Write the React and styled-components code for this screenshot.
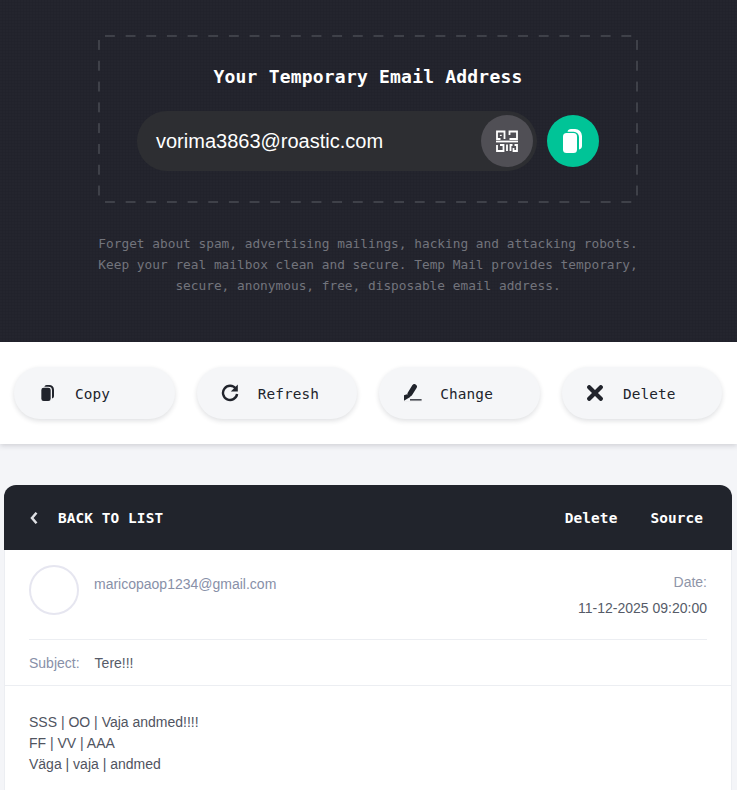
import React from 'react';
import styled, { createGlobalStyle } from 'styled-components';

const Global = createGlobalStyle`
  html, body { margin: 0; padding: 0; background: #f4f5f8; }
  * { box-sizing: border-box; }
  body { font-family: "Liberation Sans", Arial, sans-serif; height: 790px; overflow: hidden; }
`;
const MONO = `"DejaVu Sans Mono", "Liberation Mono", monospace`;
const DASH = '#3f4149';

const Hero = styled.header`
  height: 342px;
  padding: 35px 1px 0 0;
  background-color: #22232c;
  background-image:
    radial-gradient(circle at 1px 1px, rgba(255,255,255,.007) 0 1px, transparent 1px),
    radial-gradient(circle at 2.5px 2.5px, rgba(0,0,0,.025) 0 1px, transparent 1px);
  background-size: 3px 3px;
  display: flex;
  flex-direction: column;
  align-items: center;
`;
const DashedBox = styled.div`
  width: 540px;
  height: 168px;
  background-image:
    linear-gradient(90deg, ${DASH} 10px, transparent 10px),
    linear-gradient(90deg, ${DASH} 10px, transparent 10px),
    linear-gradient(${DASH} 10px, transparent 10px),
    linear-gradient(${DASH} 10px, transparent 10px);
  background-size: 20.67px 2px, 20.67px 2px, 2px 20.8px, 2px 20.8px;
  background-position: 7px 0, 7px 100%, 0 5px, 100% 5px;
  background-repeat: repeat-x, repeat-x, repeat-y, repeat-y;
  display: flex;
  flex-direction: column;
  align-items: center;
  padding-top: 30px;
`;
const Title = styled.h1`
  margin: 0 0 22px;
  font: 700 18px/24px ${MONO};
  letter-spacing: 0.2px;
  color: #fff;
`;
const AddressRow = styled.div`
  display: flex;
  align-items: center;
  gap: 10px;
`;
const Pill = styled.div`
  width: 400px;
  height: 60px;
  border-radius: 30px;
  background: #2d2e32;
  display: flex;
  align-items: center;
  justify-content: space-between;
  padding: 0 4px 0 19px;
  color: #fff;
  font-size: 20px;
`;
const RoundButton = styled.div`
  width: 52px;
  height: 52px;
  border-radius: 50%;
  background: ${p => p.$bg};
  display: flex;
  align-items: center;
  justify-content: center;
  color: #fff;
  flex: none;
`;
const Blurb = styled.p`
  margin: 30px 0 0;
  width: 560px;
  text-align: center;
  font: 400 12.8px/21px ${MONO};
  color: #72747c;
`;
const Toolbar = styled.nav`
  position: relative;
  height: 102px;
  background: #fff;
  box-shadow: 0 2px 5px rgba(30, 32, 50, .16);
  display: grid;
  grid-template-columns: repeat(4, 160.5px);
  gap: 22.17px;
  align-items: center;
  padding: 0 14px;
`;
const ToolButton = styled.div`
  height: 52px;
  border-radius: 26px;
  background: #f5f6f8;
  box-shadow: 0 2px 5px rgba(30, 32, 50, .14);
  display: flex;
  align-items: center;
  padding-left: 23.5px;
  font: 400 14.4px/20px ${MONO};
  letter-spacing: 0.1px;
  color: #21242c;
`;
const ToolIcon = styled.span`
  width: 20px;
  margin-right: 17.5px;
  flex: none;
  display: flex;
  align-items: center;
  justify-content: center;
`;
const ToolLabel = styled.span`
  padding-top: 1px;
`;
const Card = styled.main`
  margin: 41px 5px 0 4px;
  background: #fff;
  border-radius: 12px 12px 0 0;
  border: solid #eceef2;
  border-width: 0 1px;
`;
const CardBar = styled.div`
  margin: 0 -1px;
  height: 65px;
  border-radius: 12px 12px 0 0;
  background: #21242c;
  display: flex;
  align-items: center;
  justify-content: space-between;
  padding: 0 29px 0 25.5px;
  font: 700 14.4px/20px ${MONO};
  letter-spacing: 0.1px;
  color: #fff;
`;
const BarGroup = styled.div`
  display: flex;
  align-items: center;
  gap: ${p => p.$gap}px;
`;
const Meta = styled.div`
  margin: 0 24px;
  height: 90px;
  padding-top: 15px;
  border-bottom: 1px solid #eceef2;
  display: flex;
  justify-content: space-between;
  font-size: 14px;
`;
const Sender = styled.div`
  display: flex;
  gap: 15px;
  color: #8890a8;
  line-height: 38px;
`;
const Avatar = styled.div`
  width: 50px;
  height: 50px;
  border-radius: 50%;
  border: 2px solid #e6e6f0;
`;
const DateBlock = styled.div`
  text-align: right;
  line-height: 26px;
  padding-top: 4px;
  color: #565b68;
`;
const DateLabel = styled.div`
  color: #8f95a8;
`;
const Subject = styled.div`
  height: 46px;
  padding: 0 24px;
  border-bottom: 1px solid #eceef2;
  display: flex;
  align-items: center;
  gap: 15px;
  font-size: 14px;
  color: #565b68;
`;
const SubjectLabel = styled.span`
  color: #8890a8;
`;
const Body = styled.div`
  padding: 26px 24px;
  font-size: 14px;
  line-height: 21px;
  color: #50545f;
`;

const CopyIcon = ({ size = 24 }) => (
  <svg width={size} height={size} viewBox="0 0 24 24" fill="currentColor">
    <rect x="2" y="4" width="14" height="20" rx="3.5" />
    <path d="M6.5 2.8A3.6 3.6 0 0 1 10 0h4a7 7 0 0 1 7 7v10a3.5 3.5 0 0 1-3 3.4V8a5.3 5.3 0 0 0-5.3-5.2z" />
  </svg>
);
const QrIcon = () => (
  <svg width="22" height="22" viewBox="0 0 22 22" fill="none" stroke="#fff" strokeWidth="1.8">
    <path d="M4.5 9H1V1.5h7.5V9" />
    <path d="M4.8 4.8V6" />
    <path d="M13.5 5V1.5H21V9h-7.5" />
    <path d="M0 11.5h22" />
    <path d="M1 15v6h6.5v-6H4" />
    <path d="M11 14.5V21" />
    <path d="M14.5 21v-6h2M18.5 15H21v6h-3.5v-3" />
  </svg>
);
const RefreshIcon = () => (
  <svg width="18" height="18" viewBox="0 0 18 18" fill="none">
    <path d="M14.8 4.6A7.1 7.1 0 1 0 16.1 10" stroke="currentColor" strokeWidth="2.4" />
    <path d="M16.8 0.6v7h-7z" fill="currentColor" />
  </svg>
);
const MarkerIcon = () => (
  <svg width="18" height="18" viewBox="0 0 18 18" fill="none">
    <path d="M0 17.5h18v.5H0z" fill="#000" opacity=".06" />
    <path d="M10.4 2.6 6 9.8" stroke="currentColor" strokeWidth="5" strokeLinecap="round" />
    <path d="M3 10.2l3.4 2.1-.6 1L0 16.8v-5.6z" fill="currentColor" />
    <path d="M6 15.2h11.6v1.3H6z" fill="currentColor" />
  </svg>
);
const CloseIcon = () => (
  <svg width="16" height="16" viewBox="0 0 16 16" stroke="currentColor" strokeWidth="4.2" strokeLinecap="round">
    <path d="M2.2 2.2l11.6 11.6M13.8 2.2 2.2 13.8" />
  </svg>
);
const Chevron = () => (
  <svg width="8.5" height="12" viewBox="0 0 8.5 12" fill="none" stroke="#dfe0e4" strokeWidth="2.5">
    <path d="M6.5 .8 2 6l4.5 5.2" />
  </svg>
);

const tools = [
  ['Copy', <CopyIcon size={16} />],
  ['Refresh', <RefreshIcon />],
  ['Change', <MarkerIcon />],
  ['Delete', <CloseIcon />],
];

export default function App() {
  return (
    <>
      <Global />
      <Hero>
        <DashedBox>
          <Title>Your Temporary Email Address</Title>
          <AddressRow>
            <Pill>
              vorima3863@roastic.com
              <RoundButton $bg="#504f55"><QrIcon /></RoundButton>
            </Pill>
            <RoundButton $bg="#00c497"><CopyIcon /></RoundButton>
          </AddressRow>
        </DashedBox>
        <Blurb>
          Forget about spam, advertising mailings, hacking and attacking robots.<br />
          Keep your real mailbox clean and secure. Temp Mail provides temporary,<br />
          secure, anonymous, free, disposable email address.
        </Blurb>
      </Hero>
      <Toolbar>
        {tools.map(([label, icon]) => (
          <ToolButton key={label}><ToolIcon>{icon}</ToolIcon><ToolLabel>{label}</ToolLabel></ToolButton>
        ))}
      </Toolbar>
      <Card>
        <CardBar>
          <BarGroup $gap={20}><Chevron /><span>BACK TO LIST</span></BarGroup>
          <BarGroup $gap={33}><span>Delete</span><span>Source</span></BarGroup>
        </CardBar>
        <Meta>
          <Sender><Avatar /><span>maricopaop1234@gmail.com</span></Sender>
          <DateBlock><DateLabel>Date:</DateLabel>11-12-2025 09:20:00</DateBlock>
        </Meta>
        <Subject><SubjectLabel>Subject:</SubjectLabel><span>Tere!!!</span></Subject>
        <Body>
          SSS | OO | Vaja andmed!!!!<br />
          FF | VV | AAA<br />
          Väga | vaja | andmed
        </Body>
      </Card>
    </>
  );
}
